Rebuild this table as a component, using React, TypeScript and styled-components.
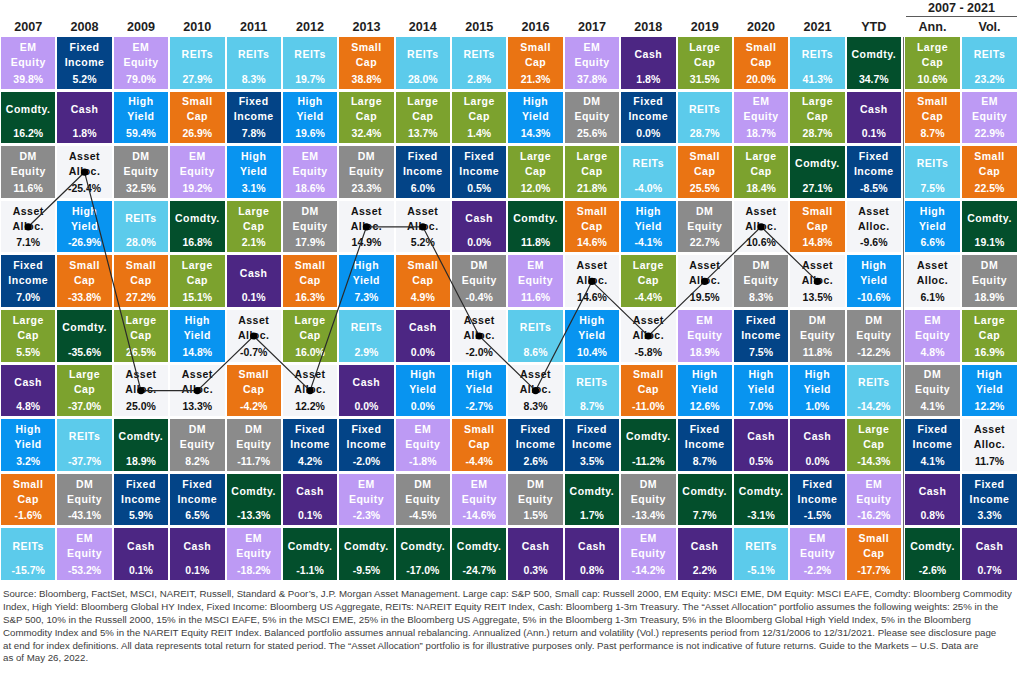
import React from "react";
import styled, { createGlobalStyle } from "styled-components";

const GlobalStyle = createGlobalStyle`
  html, body {
    margin: 0;
    padding: 0;
    background: #ffffff;
  }
  body {
    font-family: "Liberation Sans", Arial, sans-serif;
  }
`;

type Kind = "em" | "fi" | "re" | "co" | "ca" | "hy" | "sc" | "dm" | "lc" | "aa";

const KINDS: Record<Kind, { label: string[]; bg: string }> = {
  em: { label: ["EM", "Equity"], bg: "#bd9af4" },
  fi: { label: ["Fixed", "Income"], bg: "#034487" },
  re: { label: ["REITs"], bg: "#5ccbeb" },
  co: { label: ["Comdty."], bg: "#034f2c" },
  ca: { label: ["Cash"], bg: "#4c2683" },
  hy: { label: ["High", "Yield"], bg: "#0894f0" },
  sc: { label: ["Small", "Cap"], bg: "#ea7413" },
  dm: { label: ["DM", "Equity"], bg: "#8b8b8b" },
  lc: { label: ["Large", "Cap"], bg: "#7ca22e" },
  aa: { label: ["Asset", "Alloc."], bg: "#f4f5f8" },
};

const YEARS: [string, string][] = [
  ["2007", "em 39.8,co 16.2,dm 11.6,aa 7.1,fi 7.0,lc 5.5,ca 4.8,hy 3.2,sc -1.6,re -15.7"],
  ["2008", "fi 5.2,ca 1.8,aa -25.4,hy -26.9,sc -33.8,co -35.6,lc -37.0,re -37.7,dm -43.1,em -53.2"],
  ["2009", "em 79.0,hy 59.4,dm 32.5,re 28.0,sc 27.2,lc 26.5,aa 25.0,co 18.9,fi 5.9,ca 0.1"],
  ["2010", "re 27.9,sc 26.9,em 19.2,co 16.8,lc 15.1,hy 14.8,aa 13.3,dm 8.2,fi 6.5,ca 0.1"],
  ["2011", "re 8.3,fi 7.8,hy 3.1,lc 2.1,ca 0.1,aa -0.7,sc -4.2,dm -11.7,co -13.3,em -18.2"],
  ["2012", "re 19.7,hy 19.6,em 18.6,dm 17.9,sc 16.3,lc 16.0,aa 12.2,fi 4.2,ca 0.1,co -1.1"],
  ["2013", "sc 38.8,lc 32.4,dm 23.3,aa 14.9,hy 7.3,re 2.9,ca 0.0,fi -2.0,em -2.3,co -9.5"],
  ["2014", "re 28.0,lc 13.7,fi 6.0,aa 5.2,sc 4.9,ca 0.0,hy 0.0,em -1.8,dm -4.5,co -17.0"],
  ["2015", "re 2.8,lc 1.4,fi 0.5,ca 0.0,dm -0.4,aa -2.0,hy -2.7,sc -4.4,em -14.6,co -24.7"],
  ["2016", "sc 21.3,hy 14.3,lc 12.0,co 11.8,em 11.6,re 8.6,aa 8.3,fi 2.6,dm 1.5,ca 0.3"],
  ["2017", "em 37.8,dm 25.6,lc 21.8,sc 14.6,aa 14.6,hy 10.4,re 8.7,fi 3.5,co 1.7,ca 0.8"],
  ["2018", "ca 1.8,fi 0.0,re -4.0,hy -4.1,lc -4.4,aa -5.8,sc -11.0,co -11.2,dm -13.4,em -14.2"],
  ["2019", "lc 31.5,re 28.7,sc 25.5,dm 22.7,aa 19.5,em 18.9,hy 12.6,fi 8.7,co 7.7,ca 2.2"],
  ["2020", "sc 20.0,em 18.7,lc 18.4,aa 10.6,dm 8.3,fi 7.5,hy 7.0,ca 0.5,co -3.1,re -5.1"],
  ["2021", "re 41.3,lc 28.7,co 27.1,sc 14.8,aa 13.5,dm 11.8,hy 1.0,ca 0.0,fi -1.5,em -2.2"],
  ["YTD", "co 34.7,ca 0.1,fi -8.5,aa -9.6,hy -10.6,dm -12.2,re -14.2,lc -14.3,em -16.2,sc -17.7"],
];

const SUMMARY: [string, string][] = [
  ["Ann.", "lc 10.6,sc 8.7,re 7.5,hy 6.6,aa 6.1,em 4.8,dm 4.1,fi 4.1,ca 0.8,co -2.6"],
  ["Vol.", "re 23.2,em 22.9,sc 22.5,co 19.1,dm 18.9,lc 16.9,hy 12.2,aa 11.7,fi 3.3,ca 0.7"],
];

const parse = (s: string) =>
  s.split(",").map((item) => {
    const [k, v] = item.split(" ");
    return { kind: k as Kind, value: `${v}%` };
  });

const COL_W = 54.375;
const COL_GAP = 2;
const ROW_H = 51.6;
const ROW_GAP = 3;
const GRID_W = 900;
const GRID_H = ROW_H * 10 + ROW_GAP * 9;

const Page = styled.div`
  width: 1024px;
  height: 674px;
  overflow: hidden;
  background: #ffffff;
`;

const Chart = styled.div`
  display: flex;
  align-items: stretch;
  padding-left: 1px;
`;

const MainBlock = styled.div`
  width: ${GRID_W}px;
  display: flex;
  flex-direction: column;
`;

const YearRow = styled.div<{ $cols: number }>`
  display: grid;
  grid-template-columns: repeat(${(p) => p.$cols}, 1fr);
  column-gap: ${COL_GAP}px;
  height: 37px;
`;

const YearLabel = styled.div`
  display: flex;
  align-items: flex-end;
  justify-content: center;
  padding-bottom: 3px;
  box-sizing: border-box;
  font-size: 12.6px;
  line-height: 14px;
  font-weight: bold;
  color: #1e1e1e;
`;

const QuiltWrap = styled.div`
  position: relative;
`;

const Quilt = styled.div<{ $cols: number }>`
  display: grid;
  grid-template-columns: repeat(${(p) => p.$cols}, 1fr);
  grid-template-rows: repeat(10, ${ROW_H}px);
  grid-auto-flow: column;
  column-gap: ${COL_GAP}px;
  row-gap: ${ROW_GAP}px;
`;

const Cell = styled.div<{ $bg: string; $dark: boolean }>`
  background: ${(p) => p.$bg};
  color: ${(p) => (p.$dark ? "#111111" : "#ffffff")};
  display: flex;
  flex-direction: column;
  align-items: center;
  padding: 1px 0 3px;
  box-sizing: border-box;
  font-size: 10.5px;
  font-weight: bold;
  text-align: center;
  overflow: hidden;
`;

const Label = styled.div`
  flex: 1;
  display: flex;
  flex-direction: column;
  justify-content: center;
  line-height: 15px;
  letter-spacing: 0.5px;
  white-space: nowrap;
`;

const Value = styled.div`
  line-height: 14px;
  white-space: nowrap;
`;

const Overlay = styled.svg`
  position: absolute;
  left: 0;
  top: 0;
  pointer-events: none;
`;

const Divider = styled.div`
  width: 1px;
  margin: 37px 1.5px 0;
  background: #6e6e6e;
`;

const SideBlock = styled.div`
  width: 112px;
  display: flex;
  flex-direction: column;
`;

const SideHeader = styled.div`
  height: 37px;
  display: flex;
  flex-direction: column;
`;

const SideTitle = styled.div`
  height: 16px;
  line-height: 16px;
  margin-left: 1px;
  border-bottom: 1.5px solid #5a5a5a;
  text-align: center;
  font-size: 12.6px;
  font-weight: bold;
  color: #1e1e1e;
`;

const SideYears = styled(YearRow)`
  flex: 1;
  height: auto;
`;

const Footer = styled.div`
  margin-top: 8px;
  padding-left: 3px;
  font-size: 9.7px;
  line-height: 12.9px;
  color: #3c3c3c;
`;

const FootLine = styled.div`
  white-space: nowrap;
`;

const FOOTNOTES = [
  "Source: Bloomberg, FactSet, MSCI, NAREIT, Russell, Standard & Poor’s, J.P. Morgan Asset Management. Large cap: S&P 500, Small cap: Russell 2000, EM Equity: MSCI EME, DM Equity: MSCI EAFE, Comdty: Bloomberg Commodity",
  "Index, High Yield: Bloomberg Global HY Index, Fixed Income: Bloomberg US Aggregate, REITs: NAREIT Equity REIT Index, Cash: Bloomberg 1-3m Treasury. The “Asset Allocation” portfolio assumes the following weights: 25% in the",
  "S&P 500, 10% in the Russell 2000, 15% in the MSCI EAFE, 5% in the MSCI EME, 25% in the Bloomberg US Aggregate, 5% in the Bloomberg 1-3m Treasury, 5% in the Bloomberg Global High Yield Index, 5% in the Bloomberg",
  "Commodity Index and 5% in the NAREIT Equity REIT Index. Balanced portfolio assumes annual rebalancing. Annualized (Ann.) return and volatility (Vol.) represents period from 12/31/2006 to 12/31/2021. Please see disclosure page",
  "at end for index definitions. All data represents total return for stated period. The “Asset Allocation” portfolio is for illustrative purposes only. Past performance is not indicative of future returns. Guide to the Markets – U.S. Data are",
  "as of May 26, 2022.",
];

function QuiltCell({ kind, value }: { kind: Kind; value: string }) {
  const k = KINDS[kind];
  return (
    <Cell $bg={k.bg} $dark={kind === "aa"}>
      <Label>
        {k.label.map((l) => (
          <span key={l}>{l}</span>
        ))}
      </Label>
      <Value>{value}</Value>
    </Cell>
  );
}

function AllocLine() {
  // dots on the Asset Alloc. cells of each calendar year (not YTD)
  const pts = YEARS.slice(0, 15).map(([, data], c) => {
    const r = parse(data).findIndex((d) => d.kind === "aa");
    return {
      x: c * (COL_W + COL_GAP) + COL_W / 2,
      y: r * (ROW_H + ROW_GAP) + 26,
    };
  });
  return (
    <Overlay width={GRID_W} height={GRID_H} viewBox={`0 0 ${GRID_W} ${GRID_H}`}>
      <polyline
        points={pts.map((p) => `${p.x},${p.y}`).join(" ")}
        fill="none"
        stroke="#2a2a2a"
        strokeWidth={1.2}
      />
      {pts.map((p, i) => (
        <circle key={i} cx={p.x} cy={p.y} r={3.6} fill="#000000" />
      ))}
    </Overlay>
  );
}

export default function App() {
  return (
    <Page>
      <GlobalStyle />
      <Chart>
        <MainBlock>
          <YearRow $cols={16}>
            {YEARS.map(([y]) => (
              <YearLabel key={y}>{y}</YearLabel>
            ))}
          </YearRow>
          <QuiltWrap>
            <Quilt $cols={16}>
              {YEARS.map(([y, data]) =>
                parse(data).map((d, i) => <QuiltCell key={`${y}-${i}`} kind={d.kind} value={d.value} />)
              )}
            </Quilt>
            <AllocLine />
          </QuiltWrap>
        </MainBlock>

        <Divider />

        <SideBlock>
          <SideHeader>
            <SideTitle>2007 - 2021</SideTitle>
            <SideYears $cols={2}>
              {SUMMARY.map(([y]) => (
                <YearLabel key={y}>{y}</YearLabel>
              ))}
            </SideYears>
          </SideHeader>
          <Quilt $cols={2}>
            {SUMMARY.map(([y, data]) =>
              parse(data).map((d, i) => <QuiltCell key={`${y}-${i}`} kind={d.kind} value={d.value} />)
            )}
          </Quilt>
        </SideBlock>
      </Chart>

      <Footer>
        {FOOTNOTES.map((line, i) => (
          <FootLine key={i}>{line}</FootLine>
        ))}
      </Footer>
    </Page>
  );
}
